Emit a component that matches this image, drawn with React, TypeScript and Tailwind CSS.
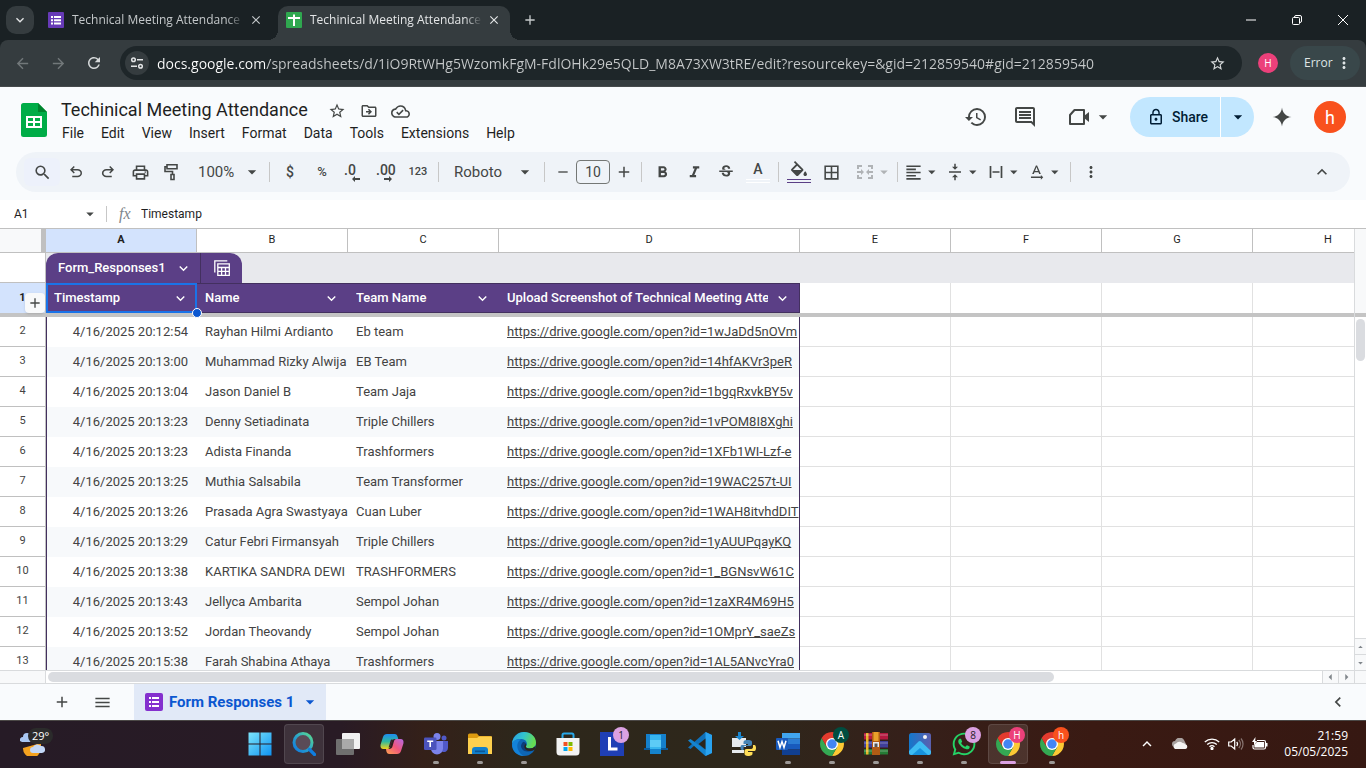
import React from "react";
import {
  MdAdd,
  MdArrowBack,
  MdArrowDropDown,
  MdArrowDropUp,
  MdArrowForward,
  MdArrowLeft,
  MdArrowRight,
  MdBorderAll,
  MdClose,
  MdFormatAlignLeft,
  MdFormatBold,
  MdFormatItalic,
  MdHistory,
  MdKeyboardArrowDown,
  MdKeyboardArrowLeft,
  MdKeyboardArrowUp,
  MdLockOutline,
  MdMenu,
  MdMoreVert,
  MdOutlineCloudDone,
  MdOutlineComment,
  MdOutlineDriveFileMove,
  MdOutlinePrint,
  MdRefresh,
  MdRemove,
  MdSearch,
  MdStarBorder,
  MdStrikethroughS,
  MdTextRotationNone,
  MdVerticalAlignCenter,
} from "react-icons/md";
import { FaWhatsapp } from "react-icons/fa";

/* ---------- data ---------- */

const URL_TEXT =
  "docs.google.com/spreadsheets/d/1iO9RtWHg5WzomkFgM-FdlOHk29e5QLD_M8A73XW3tRE/edit?resourcekey=&gid=212859540#gid=212859540";

const MENUS = ["File", "Edit", "View", "Insert", "Format", "Data", "Tools", "Extensions", "Help"];

const LINK = "https://drive.google.com/open?id=";

const ROWS: [number, string, string, string, string][] = [
  [2, "4/16/2025 20:12:54", "Rayhan Hilmi Ardianto", "Eb team", "1wJaDd5nOVm"],
  [3, "4/16/2025 20:13:00", "Muhammad Rizky Alwija", "EB Team", "14hfAKVr3peR"],
  [4, "4/16/2025 20:13:04", "Jason Daniel B", "Team Jaja", "1bgqRxvkBY5v"],
  [5, "4/16/2025 20:13:23", "Denny Setiadinata", "Triple Chillers", "1vPOM8I8Xghi"],
  [6, "4/16/2025 20:13:23", "Adista Finanda", "Trashformers", "1XFb1WI-Lzf-e"],
  [7, "4/16/2025 20:13:25", "Muthia Salsabila", "Team Transformer", "19WAC257t-UI"],
  [8, "4/16/2025 20:13:26", "Prasada Agra Swastyaya", "Cuan Luber", "1WAH8itvhdDIT"],
  [9, "4/16/2025 20:13:29", "Catur Febri Firmansyah", "Triple Chillers", "1yAUUPqayKQ"],
  [10, "4/16/2025 20:13:38", "KARTIKA SANDRA DEWI", "TRASHFORMERS", "1_BGNsvW61C"],
  [11, "4/16/2025 20:13:43", "Jellyca Ambarita", "Sempol Johan", "1zaXR4M69H5"],
  [12, "4/16/2025 20:13:52", "Jordan Theovandy", "Sempol Johan", "1OMprY_saeZs"],
  [13, "4/16/2025 20:15:38", "Farah Shabina Athaya", "Trashformers", "1AL5ANvcYra0"],
];

/* ---------- browser chrome ---------- */

function Tab({ title, active, icon }: { title: string; active?: boolean; icon: React.ReactNode }) {
  return (
    <div
      className={
        active
          ? "relative mt-1.5 flex h-[34px] w-[232px] items-center rounded-t-[10px] bg-[#353c3f] pr-2 pb-1.5 pl-2 text-[#e3e5e6]"
          : "relative mt-1.5 flex h-[34px] w-[238px] items-center pr-3.5 pb-1.5 pl-2 text-[#c3c7c9]"
      }
    >
      {active && (
        <>
          <span className="absolute bottom-0 -left-2.5 size-2.5 bg-[radial-gradient(circle_at_0_0,transparent_10px,#353c3f_10px)]" />
          <span className="absolute -right-2.5 bottom-0 size-2.5 bg-[radial-gradient(circle_at_100%_0,transparent_10px,#353c3f_10px)]" />
        </>
      )}
      {icon}
      <button className="ml-2 min-w-0 flex-1 overflow-hidden mask-r-from-90% text-left text-[12px] whitespace-nowrap">
        {title}
      </button>
      <button aria-label="Close tab" className="ml-1 flex size-4 items-center justify-center">
        <MdClose size={14} />
      </button>
    </div>
  );
}

function BrowserChrome() {
  return (
    <header className="bg-[#1a2124] font-['Open_Sans','Noto_Sans',sans-serif]">
      <div className="flex h-10">
        <button
          aria-label="Search tabs"
          className="mt-1.5 mr-1.5 ml-1.5 flex size-7 items-center justify-center rounded-[10px] bg-[#353c3f] text-[#e3e5e6]"
        >
          <MdKeyboardArrowDown size={16} />
        </button>
        <Tab
          title="Technical Meeting Attendance -"
          icon={
            <svg viewBox="0 0 16 16" className="size-4 shrink-0">
              <rect width="16" height="16" rx="1" fill="#673ab7" />
              <path
                d="M3 4h2v2H3zM6 4h7v2H6zM3 7.2h2v2H3zM6 7.2h7v2H6zM3 10.4h2v2H3zM6 10.4h7v2H6z"
                fill="#fff"
              />
            </svg>
          }
        />
        <Tab
          active
          title="Techinical Meeting Attendance"
          icon={
            <svg viewBox="0 0 16 16" className="size-4 shrink-0">
              <rect width="16" height="16" rx="1" fill="#2fa84f" />
              <path d="M7 2.5h2V5h5v2H9v7H7V7H2V5h5z" fill="#fff" />
            </svg>
          }
        />
        <button aria-label="New tab" className="ml-2.5 flex w-5 items-center justify-center text-[#c7cbcc]">
          <MdAdd size={16} />
        </button>
        <div className="ml-auto flex text-white">
          <button aria-label="Minimize" className="flex w-[46px] items-center justify-center">
            <svg viewBox="0 0 10 10" className="size-2.5">
              <path d="M0 5h10" stroke="currentColor" />
            </svg>
          </button>
          <button aria-label="Restore" className="flex w-[46px] items-center justify-center">
            <svg viewBox="0 0 10 10" className="size-2.5" fill="none" stroke="currentColor">
              <rect x=".5" y="2.5" width="7" height="7" rx="1" />
              <path d="M2.5 2.5V2A1.5 1.5 0 0 1 4 .5h4A1.500 1.500 0 0 1 9.500 2v4A1.500 1.500 0 0 1 8 7.500h-.5" />
            </svg>
          </button>
          <button aria-label="Close window" className="flex w-[46px] items-center justify-center">
            <svg viewBox="0 0 10 10" className="size-2.5">
              <path d="M0 0l10 10M10 0L0 10" stroke="currentColor" />
            </svg>
          </button>
        </div>
      </div>
      <div className="flex h-[47px] items-center rounded-t-lg border-b border-[#464a4c] bg-[#353c3f] pr-1.5 pl-3">
        <button aria-label="Back" className="mr-4 flex size-5 items-center justify-center text-[#72787a]">
          <MdArrowBack size={17} />
        </button>
        <button aria-label="Forward" className="mr-4 flex size-5 items-center justify-center text-[#72787a]">
          <MdArrowForward size={17} />
        </button>
        <button aria-label="Reload" className="mr-4 flex size-5 items-center justify-center text-[#d5d8d9]">
          <MdRefresh size={18} />
        </button>
        <div className="flex h-[34px] flex-1 items-center rounded-full bg-[#1e2629] pr-4 pl-[5px]">
          <button
            aria-label="Site information"
            className="flex size-6 items-center justify-center rounded-full bg-[#353c3f] text-[#e3e5e6]"
          >
            <svg viewBox="0 0 14 14" className="size-3.5" fill="none" stroke="currentColor" strokeWidth="1.5">
              <circle cx="3.500" cy="3.800" r="1.800" />
              <path d="M7 3.800h6M1 10.200h6" />
              <circle cx="10.500" cy="10.200" r="1.800" />
            </svg>
          </button>
          <input
            aria-label="Address"
            defaultValue={URL_TEXT}
            className="ml-2 min-w-0 flex-1 bg-[linear-gradient(90deg,#ffffff_108px,#c6c9ca_108px)] bg-clip-text text-[14px] text-transparent outline-none"
          />
          <button aria-label="Bookmark this tab" className="text-[#d5d8d9]">
            <MdStarBorder size={17} />
          </button>
        </div>
        <button
          aria-label="Profile"
          className="ml-4 flex size-5 items-center justify-center rounded-full bg-[#ec407a] text-[10px] text-white"
        >
          H
        </button>
        <button className="ml-3 flex h-[34px] w-[70px] items-center rounded-full bg-[#39474a] pl-3.5 text-[12px] text-[#dfe5e6]">
          Error
          <MdMoreVert size={18} className="ml-0.5" />
        </button>
      </div>
    </header>
  );
}

/* ---------- document header ---------- */

function DocHeader() {
  return (
    <div className="flex h-[65px] pr-5 pl-[21px] text-[#444746]">
      <svg viewBox="0 0 26 34" className="mt-4 h-[34px] w-[26px] shrink-0">
        <path d="M2.500 0H17l9 9v22.500a2.500 2.500 0 0 1-2.500 2.500h-21A2.500 2.500 0 0 1 0 31.500v-29A2.500 2.500 0 0 1 2.500 0z" fill="#00ac47" />
        <path d="M17 0l9 9h-9z" fill="#00832d" />
        <path d="M5 13h16v12H5zm2 2v3h5v-3zm7 0v3h5v-3zm-7 5v3h5v-3zm7 0v3h5v-3z" fill="#fff" fillRule="evenodd" />
      </svg>
      <div className="ml-2 pt-2.5">
        <div className="flex h-6 items-center">
          <h1 className="px-1.5 text-[18px] text-[#1f1f1f]">Techinical Meeting Attendance</h1>
          <div className="mt-1 ml-[13px] flex gap-3">
            <button aria-label="Star" className="flex size-5 items-center justify-center">
              <MdStarBorder size={18} />
            </button>
            <button aria-label="Move" className="flex size-5 items-center justify-center">
              <MdOutlineDriveFileMove size={18} />
            </button>
            <button aria-label="See document status" className="flex size-5 items-center justify-center">
              <MdOutlineCloudDone size={19} />
            </button>
          </div>
        </div>
        <nav className="mt-0.5 flex h-5 items-center text-[14px] text-[#1f1f1f]">
          {MENUS.map((m) => (
            <button key={m} className="mr-[3px] px-[7px]">
              {m}
            </button>
          ))}
        </nav>
      </div>
      <div className="ml-auto flex h-[60px] items-center">
        <button aria-label="Version history" className="mr-[25px]">
          <MdHistory size={24} />
        </button>
        <button aria-label="Show all comments" className="mr-8">
          <MdOutlineComment size={24} />
        </button>
        <button aria-label="Join a call" className="mr-[17px] flex items-center">
          <svg viewBox="0 0 20 16" className="h-4 w-5" fill="none" stroke="currentColor" strokeWidth="2">
            <path d="M5.500 1H15v14H1V6z" strokeLinejoin="round" />
            <path d="M15 7l5-4v10l-5-4z" fill="currentColor" stroke="none" />
          </svg>
          <MdArrowDropDown size={20} className="ml-1" />
        </button>
        <div className="flex h-10 overflow-hidden rounded-full bg-[#c2e7ff] text-[14px] font-medium text-[#001d35]">
          <button className="flex w-[91px] items-center border-r border-white pl-[17px]">
            <MdLockOutline size={18} className="mr-[7px]" />
            Share
          </button>
          <button aria-label="Quick sharing actions" className="flex w-[33px] items-center justify-center">
            <MdArrowDropDown size={20} />
          </button>
        </div>
        <button aria-label="Ask Gemini" className="mr-[22px] ml-[18px]">
          <svg viewBox="0 0 20 20" className="size-5">
            <path d="M10 .5c.6 5.500 4 8.900 9.500 9.500-5.500.6-8.900 4-9.500 9.500-.6-5.500-4-8.900-9.500-9.500C6 9.400 9.400 6 10 .5z" fill="currentColor" />
          </svg>
        </button>
        <button
          aria-label="Account"
          className="flex size-8 items-center justify-center rounded-full bg-[#f9511d] text-[18px] text-white"
        >
          h
        </button>
      </div>
    </div>
  );
}

/* ---------- toolbar ---------- */

function Tool({ label, children }: { label: string; children: React.ReactNode }) {
  return (
    <button aria-label={label} className="flex h-8 w-8 shrink-0 items-center justify-center">
      {children}
    </button>
  );
}

function ToolMenu({ label, children }: { label: string; children: React.ReactNode }) {
  return (
    <button aria-label={label} className="flex h-8 w-[41px] shrink-0 items-center justify-between pr-0.5 pl-0.5">
      <span className="flex w-5 justify-center">{children}</span>
      <MdArrowDropDown size={18} />
    </button>
  );
}

function Divider() {
  return <span className="mx-1 h-5 w-px shrink-0 bg-[#c7c7c7]" />;
}

function Toolbar() {
  return (
    <div className="px-4 pb-2">
      <div className="flex h-10 items-center rounded-full bg-[#eff3f8] pl-2 text-[#444746]">
        <button aria-label="Search the menus" className="flex h-7 w-9 items-center justify-center rounded-md bg-[#edf1fb]">
          <MdSearch size={19} />
        </button>
        <Tool label="Undo">
          <svg viewBox="0 -960 960 960" className="size-[18px]" fill="currentColor">
            <path d="M280-200v-80h284q63 0 109.500-40T720-420q0-60-46.500-100T564-560H312l104 104-56 56-200-200 200-200 56 56-104 104h252q97 0 169.500 63T800-420q0 94-72.500 157T564-200H280Z" />
          </svg>
        </Tool>
        <Tool label="Redo">
          <svg viewBox="0 -960 960 960" className="size-[18px]" fill="currentColor">
            <path d="M396-200q-97 0-169.500-63T154-420q0-94 72.500-157T396-640h252L544-744l56-56 200 200-200 200-56-56 104-104H396q-63 0-109.500 40T240-420q0 60 46.500 100T396-280h284v80H396Z" />
          </svg>
        </Tool>
        <Tool label="Print">
          <MdOutlinePrint size={19} />
        </Tool>
        <Tool label="Paint format">
          <svg viewBox="0 0 16 18" className="h-[18px] w-4" fill="none" stroke="currentColor" strokeWidth="1.600">
            <path d="M3 1.800h10v4H3zM3 3.800H1v4.700h7.500v3" />
            <path d="M7 11.500h3v5H7z" />
          </svg>
        </Tool>
        <label className="relative ml-1 flex h-8 w-[73px] items-center">
          <select aria-label="Zoom" className="w-full appearance-none bg-transparent pl-1.5 text-[15px] outline-none">
            <option>100%</option>
          </select>
          <MdArrowDropDown size={20} className="pointer-events-none absolute right-[3px]" />
        </label>
        <Divider />
        <Tool label="Format as currency">
          <span className="text-[14px] font-medium">$</span>
        </Tool>
        <Tool label="Format as percent">
          <span className="text-[13px] font-medium">%</span>
        </Tool>
        <Tool label="Decrease decimal places">
          <span className="relative -ml-1 h-5 w-4 text-left text-[14px] leading-4 font-medium">
            .0
            <svg viewBox="0 0 8 6" className="absolute right-0 bottom-0 h-1.5 w-2" fill="currentColor">
              <path d="M3 0v2h5v2H3v2L0 3z" />
            </svg>
          </span>
        </Tool>
        <Tool label="Increase decimal places">
          <span className="relative -ml-1 h-5 w-4 text-left text-[14px] leading-4 font-medium">
            .00
            <svg viewBox="0 0 8 6" className="absolute right-0 bottom-0 h-1.5 w-2" fill="currentColor">
              <path d="M5 0v2H0v2h5v2l3-3z" />
            </svg>
          </span>
        </Tool>
        <Tool label="More formats">
          <span className="text-[11px] font-medium">123</span>
        </Tool>
        <Divider />
        <label className="relative flex h-8 w-[97px] items-center">
          <select aria-label="Font" className="w-full appearance-none bg-transparent pl-[11px] text-[15px] outline-none">
            <option>Roboto</option>
          </select>
          <MdArrowDropDown size={20} className="pointer-events-none absolute right-[5px]" />
        </label>
        <Divider />
        <button aria-label="Decrease font size" className="flex h-8 w-[27px] items-center justify-center">
          <MdRemove size={16} />
        </button>
        <input
          aria-label="Font size"
          defaultValue="10"
          className="h-6 w-[34px] rounded border border-[#747775] bg-transparent text-center text-[14px] outline-none"
        />
        <button aria-label="Increase font size" className="flex h-8 w-[27px] items-center justify-center">
          <MdAdd size={18} />
        </button>
        <Divider />
        <Tool label="Bold">
          <MdFormatBold size={19} />
        </Tool>
        <Tool label="Italic">
          <MdFormatItalic size={19} />
        </Tool>
        <Tool label="Strikethrough">
          <MdStrikethroughS size={18} />
        </Tool>
        <Tool label="Text color">
          <span className="flex w-6 flex-col items-center">
            <span className="text-[14px] leading-4 font-medium">A</span>
            <span className="mt-0.5 h-1 w-full border-y border-white" />
          </span>
        </Tool>
        <Divider />
        <Tool label="Fill color">
          <span className="flex w-6 flex-col items-center">
            <svg viewBox="2 0 20 18" className="h-4 w-[18px]" fill="currentColor">
              <path d="M16.560 8.940 7.620 0 6.210 1.410l2.380 2.380-5.150 5.150a1.490 1.490 0 0 0 0 2.120l5.500 5.500c.29.29.68.44 1.060.44s.77-.15 1.060-.44l5.500-5.500c.59-.58.59-1.530 0-2.120zM5.210 10 10 5.210 14.790 10zM19 11.500s-2 2.170-2 3.500c0 1.100.9 2 2 2s2-.9 2-2c0-1.330-2-3.500-2-3.500z" />
            </svg>
            <span className="mt-0.5 h-1 w-full border-y border-[#5b3f86]" />
          </span>
        </Tool>
        <Tool label="Borders">
          <MdBorderAll size={19} />
        </Tool>
        <button aria-label="Merge cells" className="flex h-8 w-[46px] items-center justify-between pl-2.5 text-[#b0b3b6]">
          <svg viewBox="0 0 16 14" className="h-3.5 w-4" fill="none" stroke="currentColor" strokeWidth="2">
            <path d="M5 1H1v3M1 10v3h4M11 1h4v3M15 10v3h-4M0 7h5M16 7h-5" />
            <path d="M4 4l3 3-3 3zM12 4L9 7l3 3z" fill="currentColor" stroke="none" />
          </svg>
          <MdArrowDropDown size={18} />
        </button>
        <Divider />
        <ToolMenu label="Horizontal align">
          <MdFormatAlignLeft size={19} />
        </ToolMenu>
        <ToolMenu label="Vertical align">
          <MdVerticalAlignCenter size={18} />
        </ToolMenu>
        <ToolMenu label="Text wrapping">
          <svg viewBox="0 0 14 14" className="size-3.5" fill="none" stroke="currentColor" strokeWidth="1.700">
            <path d="M1.500 1v12M12.500 1v12M3.500 7h7" />
          </svg>
        </ToolMenu>
        <ToolMenu label="Text rotation">
          <MdTextRotationNone size={19} />
        </ToolMenu>
        <Divider />
        <Tool label="More">
          <MdMoreVert size={18} />
        </Tool>
        <button aria-label="Hide the menus" className="mr-[18px] ml-auto">
          <MdKeyboardArrowUp size={20} />
        </button>
      </div>
    </div>
  );
}

function FormulaBar() {
  return (
    <div className="flex h-7 shrink-0 items-center bg-white text-[13px] text-[#1f1f1f]">
      <input aria-label="Name box" defaultValue="A1" className="w-20 bg-transparent pl-3.5 text-[12px] outline-none" />
      <button aria-label="Named ranges" className="flex w-5 items-center justify-center text-[#444746]">
        <MdArrowDropDown size={18} />
      </button>
      <span className="ml-1.5 h-4 w-px bg-[#c7c7c7]" />
      <span className="ml-3 w-5 font-['Liberation_Serif',serif] text-[16px] text-[#80868b] italic">fx</span>
      <input
        aria-label="Formula bar"
        defaultValue="Timestamp"
        className="ml-0.5 min-w-0 flex-1 bg-transparent text-[12px] outline-none"
      />
    </div>
  );
}

/* ---------- grid ---------- */

const EMPTY_COLS = ["E", "F", "G", "H"];

function HeaderCell({ title }: { title: string }) {
  return (
    <div className="flex h-full items-center gap-1.5 pr-2 pl-2">
      <span className="min-w-0 flex-1 overflow-hidden text-left whitespace-nowrap">{title}</span>
      <button aria-label={"Column menu " + title}>
        <MdKeyboardArrowDown size={17} />
      </button>
    </div>
  );
}

function Grid() {
  const colHead = "h-6 border-r border-b border-[#c0c0c0] p-0 text-[11px] font-normal";
  const rowHead = "border-r border-b border-[#c0c0c0] p-0 text-[11px] font-normal";
  const purple = "h-[30px] border-y border-[#43305f] bg-[#5b3f86] p-0 font-medium text-white";
  return (
    <table className="w-[1404px] table-fixed border-separate border-spacing-0 text-[13px] text-[#434343]">
      <colgroup>
        <col className="w-[46px]" />
        <col className="w-[151px]" />
        <col className="w-[151px]" />
        <col className="w-[151px]" />
        <col className="w-[301px]" />
        <col className="w-[151px]" />
        <col className="w-[151px]" />
        <col className="w-[151px]" />
        <col className="w-[151px]" />
      </colgroup>
      <thead>
        <tr className="text-[#1f1f1f]">
          <th aria-label="Select all" className="h-6 border-r-[5px] border-b border-[#c0c0c0] bg-[#f8f9fa] p-0" />
          <th className="h-6 border-r border-b border-[#c0c0c0] bg-[#d3e3fd] p-0 text-[11px] font-bold">A</th>
          {["B", "C", "D", ...EMPTY_COLS].map((c) => (
            <th key={c} className={colHead}>
              {c}
            </th>
          ))}
        </tr>
        <tr>
          <th className="border-r border-b border-[#c0c0c0] bg-white p-0" />
          <td colSpan={8} className="h-[30px] bg-[#e8e9ed] p-0 align-bottom">
            <div className="flex h-[30px] w-[196px] rounded-t-xl bg-[#5b3f86] font-medium text-white">
              <button className="flex flex-1 items-center justify-between border-r border-[#43305f] pr-2 pl-3">
                Form_Responses1
                <MdKeyboardArrowDown size={17} />
              </button>
              <button aria-label="Table views" className="flex w-[41px] items-center justify-center">
                <svg viewBox="0 0 16 16" className="size-4" fill="none" stroke="currentColor" strokeWidth="1.300">
                  <path d="M.8 12.500V.8h12.500M3.800 3.800h11.500v11.500H3.800zM3.800 7.500h11.500M3.800 11.400h11.500M7.600 7.500v7.800M11.500 7.500v7.800" />
                </svg>
              </button>
            </div>
          </td>
        </tr>
        <tr>
          <th className="relative border-r border-[#c0c0c0] bg-[#d3e3fd] p-0 text-[11px] font-bold text-[#1f1f1f]">
            1
            <button
              aria-label="Insert row"
              className="absolute right-0 bottom-0 flex size-5 items-center justify-center rounded-sm bg-[#f8f9fa] text-[#444746] shadow"
            >
              <MdAdd size={16} />
            </button>
          </th>
          <th className={"relative " + purple}>
            <HeaderCell title="Timestamp" />
            <span className="pointer-events-none absolute inset-x-0 -inset-y-px border-2 border-[#1a73e8]" />
            <span className="absolute -right-[5px] -bottom-1.5 z-10 size-2.5 rounded-full border border-white bg-[#0b57d0]" />
          </th>
          <th className={purple}>
            <HeaderCell title="Name" />
          </th>
          <th className={purple}>
            <HeaderCell title="Team Name" />
          </th>
          <th className="h-[30px] border-y border-r border-[#43305f] bg-[#5b3f86] p-0 font-medium text-white">
            <HeaderCell title="Upload Screenshot of Technical Meeting Atte" />
          </th>
          {EMPTY_COLS.map((c) => (
            <td key={c} className="border-r border-[#e1e1e1] bg-white p-0" />
          ))}
        </tr>
        <tr>
          <td colSpan={9} className="h-1 bg-[#c4c4c4] p-0" />
        </tr>
      </thead>
      <tbody>
        {ROWS.map(([n, time, name, team, id]) => (
          <tr key={n} className="group h-[30px]">
            <th className={rowHead}>{n}</th>
            <td className="overflow-hidden border-l border-[#43305f] p-0 pr-[9px] text-right whitespace-nowrap group-even:bg-[#f7f9fb]">
              {time}
            </td>
            <td className="p-0 group-even:bg-[#f7f9fb]">
              <div className="overflow-hidden pl-2 whitespace-nowrap">{name}</div>
            </td>
            <td className="p-0 group-even:bg-[#f7f9fb]">
              <div className="overflow-hidden pl-2 whitespace-nowrap">{team}</div>
            </td>
            <td className="border-r border-[#43305f] p-0 group-even:bg-[#f7f9fb]">
              <div className="overflow-hidden pl-2 whitespace-nowrap">
                <a href={LINK + id} className="underline">
                  {LINK + id}
                </a>
              </div>
            </td>
            {EMPTY_COLS.map((c) => (
              <td key={c} className="border-r border-b border-[#e1e1e1] p-0" />
            ))}
          </tr>
        ))}
      </tbody>
    </table>
  );
}

function SheetArea() {
  const arrow = "flex items-center justify-center bg-[#f8f9fa] text-[#80868b]";
  return (
    <div className="flex min-h-0 flex-1 flex-col border-t border-[#c0c0c0] bg-white">
      <div className="flex min-h-0 flex-1">
        <div className="min-w-0 flex-1 overflow-hidden">
          <Grid />
        </div>
        <div className="flex w-3 shrink-0 flex-col border-l border-[#d9dbdd] bg-white">
          <div className="h-[88px] border-b-4 border-[#c4c4c4] bg-[#f8f9fa]" />
          <div className="mx-px mt-0.5 h-[42px] rounded-full bg-[#dadce0]" />
          <button aria-label="Scroll up" className={arrow + " mt-auto h-4 border-t border-[#d9dbdd]"}>
            <MdArrowDropUp size={16} />
          </button>
          <button aria-label="Scroll down" className={arrow + " h-4 border-t border-[#d9dbdd]"}>
            <MdArrowDropDown size={16} />
          </button>
        </div>
      </div>
      <div className="flex h-3.5 shrink-0 border-y border-[#d9dbdd]">
        <div className="w-[46px] border-r border-[#d9dbdd] bg-[#f8f9fa]" />
        <div className="flex-1 py-px pl-0.5">
          <div className="h-full w-[79%] rounded-full bg-[#dadce0]" />
        </div>
        <button aria-label="Scroll left" className={arrow + " w-4 border-l border-[#d9dbdd]"}>
          <MdArrowLeft size={16} />
        </button>
        <button aria-label="Scroll right" className={arrow + " w-4 border-l border-[#d9dbdd]"}>
          <MdArrowRight size={16} />
        </button>
        <div className="w-3 border-l border-[#d9dbdd] bg-[#f8f9fa]" />
      </div>
    </div>
  );
}

function SheetTabs() {
  return (
    <div className="flex h-9 shrink-0 items-center bg-[#f9fbfd] text-[#444746]">
      <button aria-label="Add sheet" className="ml-[52px] flex size-5 items-center justify-center">
        <MdAdd size={18} />
      </button>
      <button aria-label="All sheets" className="ml-5 flex size-5 items-center justify-center">
        <MdMenu size={19} />
      </button>
      <button className="ml-[22px] flex h-full items-center bg-[#e1e9f7] pr-1.5 pl-[11px] text-[15px] font-bold text-[#0b57d0]">
        <svg viewBox="0 0 18 18" className="mr-1.5 size-[18px]">
          <rect width="18" height="18" rx="2" fill="#8430ce" />
          <path d="M4 4h2v2H4zM7 4h7v2H7zM4 8h2v2H4zM7 8h7v2H7zM4 12h2v2H4zM7 12h7v2H7z" fill="#fff" />
        </svg>
        Form Responses 1
        <MdArrowDropDown size={20} className="ml-1.5" />
      </button>
      <button aria-label="Show side panel" className="mr-[18px] ml-auto">
        <MdKeyboardArrowLeft size={20} />
      </button>
    </div>
  );
}

/* ---------- taskbar ---------- */

function ChromeLogo() {
  return (
    <svg viewBox="0 0 24 24" className="size-6">
      <path d="M12 6h10.390A12 12 0 0 1 12 24l5.200-9z" fill="#fcc934" />
      <path d="M6.800 15L1.610 6A12 12 0 0 0 12 24l5.200-9z" fill="#34a853" />
      <path d="M12 6h10.390A12 12 0 0 0 1.610 6L6.800 15z" fill="#e33b2e" />
      <circle cx="12" cy="12" r="6" fill="#fff" />
      <circle cx="12" cy="12" r="4.700" fill="#4285f4" />
    </svg>
  );
}

type TaskbarApp = {
  name: string;
  icon: React.ReactNode;
  running?: boolean;
  active?: boolean;
  hover?: boolean;
  badge?: string;
  badgeClass?: string;
};

const APPS: TaskbarApp[] = [
  {
    name: "Start",
    icon: (
      <svg viewBox="0 0 24 24" className="size-6">
        <defs>
          <linearGradient id="win" x1="0" y1="0" x2="1" y2="1" gradientUnits="objectBoundingBox">
            <stop offset="0" stopColor="#7de5fb" />
            <stop offset="1" stopColor="#0f93f2" />
          </linearGradient>
        </defs>
        <path d="M.5 .5h11v11H.5zM12.500 .5h11v11h-11zM.5 12.500h11v11H.5zM12.500 12.500h11v11h-11z" fill="url(#win)" />
      </svg>
    ),
  },
  {
    name: "Search",
    hover: true,
    icon: (
      <svg viewBox="0 0 24 24" className="size-6" fill="none">
        <defs>
          <linearGradient id="sea" x1="1" y1="0" x2="0" y2="1">
            <stop offset="0" stopColor="#5ddc8c" />
            <stop offset=".5" stopColor="#2aa5c9" />
            <stop offset="1" stopColor="#0f78e0" />
          </linearGradient>
        </defs>
        <circle cx="11" cy="10.500" r="9" fill="#5a4b57" stroke="url(#sea)" strokeWidth="3" />
        <path d="M17.500 17.500l5 5" stroke="#0f7ee0" strokeWidth="3.200" strokeLinecap="round" />
      </svg>
    ),
  },
  {
    name: "Task view",
    icon: (
      <svg viewBox="0 0 24 24" className="size-6">
        <rect x="6" y="1" width="18" height="16" rx="1" fill="#f1f1f1" />
        <rect x="0" y="7" width="18" height="16" rx="1" fill="#6f6f6f" />
        <path d="M6 7h12v10H6z" fill="#a9a9a9" />
      </svg>
    ),
  },
  {
    name: "Copilot",
    icon: (
      <svg viewBox="0 0 24 24" className="size-6">
        <defs>
          <linearGradient id="cpa" x1="0" y1="0" x2="0" y2="1">
            <stop offset="0" stopColor="#1d8cf0" />
            <stop offset=".5" stopColor="#2fb8a0" />
            <stop offset="1" stopColor="#f2d21b" />
          </linearGradient>
          <linearGradient id="cpb" x1="1" y1="0" x2="0" y2="1">
            <stop offset="0" stopColor="#b469e8" />
            <stop offset=".5" stopColor="#f0567c" />
            <stop offset="1" stopColor="#ffa34f" />
          </linearGradient>
        </defs>
        <path d="M7 2h7.500c2 0 2.700 1 3.200 3l.6 2H15c-2 0-3 .8-3.600 3l-1.300 4.500C9.600 16.500 8.500 17 7 17H3.500C1 17 0 15 .6 12.500L3 5C3.600 3 5 2 7 2z" fill="url(#cpa)" />
        <path d="M17 22H9.500c-2 0-2.700-1-3.200-3L6 17h3c2 0 3-.8 3.600-3l1.300-4.500C14.400 7.500 15.500 7 17 7h3.500c2.500 0 3.500 2 2.900 4.500L21 19c-.6 2-2 3-4 3z" fill="url(#cpb)" />
        <path d="M12.500 7.500h-.8c-.6 0-1 .5-1.300 1.700l-1.800 6.300c.6 0 1.600-.2 2-1.500l1.300-4.500c.2-.8.400-1.500.6-2z" fill="#3a1d2b" />
      </svg>
    ),
  },
  {
    name: "Teams",
    running: true,
    icon: (
      <svg viewBox="0 0 24 24" className="size-6">
        <circle cx="13" cy="4.500" r="3.500" fill="#7b83eb" />
        <circle cx="20" cy="6" r="2.500" fill="#5059c9" />
        <path d="M16 9h8v7a4 4 0 0 1-6 3.500z" fill="#5059c9" />
        <path d="M7 9h12v7.500a6 6 0 0 1-12 0z" fill="#7b83eb" />
        <rect x="0" y="5.500" width="12.500" height="12.500" rx="1.200" fill="#4b53bc" />
        <path d="M3.200 8.500h6v1.600H7v5H5.400v-5H3.200z" fill="#fff" />
      </svg>
    ),
  },
  {
    name: "File Explorer",
    running: true,
    icon: (
      <svg viewBox="0 0 24 24" className="size-6">
        <path d="M0 3a1.500 1.500 0 0 1 1.500-1.500H9L11 4h11.500A1.500 1.500 0 0 1 24 5.500V8H0z" fill="#dc9b10" />
        <path d="M0 6h9l2-1.500h13V22H0z" fill="#fdd04e" />
        <path d="M4 22v-4a3 3 0 0 1 3-3h10a3 3 0 0 1 3 3v4z" fill="#1180cc" />
        <path d="M7 18.500h10v1.700H7z" fill="#0a5696" />
      </svg>
    ),
  },
  {
    name: "Edge",
    running: true,
    icon: (
      <svg viewBox="0 0 24 24" className="size-6">
        <defs>
          <linearGradient id="ed1" x1="0" y1="0" x2="1" y2=".3">
            <stop offset="0" stopColor="#2b9fe0" />
            <stop offset=".5" stopColor="#31c3cf" />
            <stop offset="1" stopColor="#66dc52" />
          </linearGradient>
        </defs>
        <circle cx="12" cy="12" r="12" fill="#0e66b5" />
        <path d="M0 12C.5 4.500 6 0 12 0c7 0 12 5 12 10.500 0 4-3 6-6 6-3.500 0-4.600-1.400-4-2.500 2.500-3.500-1-7.500-5-7C4.500 7 1 9 0 12z" fill="url(#ed1)" />
        <path d="M0 12.500C1 8 5 6.500 9 7.500c-3.500 2-4.500 6-3 10 1 2.700 3.500 5.500 6 6.500C5 24 0 19 0 12.500z" fill="#1382d8" />
        <path d="M14 14c-.6 1.200.5 2.500 4 2.500 1.900 0 3.700-.7 4.800-2-.3 2-1 3-1.800 4-4 2-11 1.500-12-4 0-2 1-4 2.500-4.800C14 10.500 15.300 12 14 14z" fill="#0c3d7a" />
        <path d="M14 14c-.6 1.200.5 2.500 4 2.500 2.500 0 4.500-1 5.600-3l-.4 4c-3 2-8 2-10-.5-1.500-2-1-4 .3-5 .8.500.9 1.200.5 2z" fill="#2c261c" />
      </svg>
    ),
  },
  {
    name: "Microsoft Store",
    icon: (
      <svg viewBox="0 0 24 24" className="size-6">
        <path d="M6.500 7V3a1.500 1.500 0 0 1 1.500-1.500h8A1.500 1.500 0 0 1 17.500 3v4" fill="none" stroke="#29a9ea" strokeWidth="2" />
        <path d="M.5 6h23v14a3.500 3.500 0 0 1-3.500 3.500H4A3.500 3.500 0 0 1 .5 20z" fill="#f3f3f3" />
        <path d="M7.500 10h4v4h-4z" fill="#f25022" />
        <path d="M12.500 10h4v4h-4z" fill="#7fba00" />
        <path d="M7.500 15h4v4h-4z" fill="#00a4ef" />
        <path d="M12.500 15h4v4h-4z" fill="#ffb900" />
      </svg>
    ),
  },
  {
    name: "Lenovo Vantage",
    badge: "1",
    badgeClass: "bg-[#dba1e2] text-[#1f1f1f]",
    icon: (
      <svg viewBox="0 0 24 24" className="size-6">
        <path d="M0 0h24v24H0z" fill="#1f3fb5" />
        <path d="M9.500 5v12h8" fill="none" stroke="#fff" strokeWidth="3" />
      </svg>
    ),
  },
  {
    name: "Phone Link",
    icon: (
      <svg viewBox="0 0 24 24" className="size-6">
        <path d="M2 2h20v14H2z" fill="#1480cc" />
        <path d="M0 16h24v2H0z" fill="#0a5a9a" />
        <path d="M6 3h11v19H6z" fill="#37b5ee" />
        <path d="M6 8h11v7H6z" fill="#5dcbf6" />
        <path d="M6 17h11v5H6z" fill="#1583cd" />
      </svg>
    ),
  },
  {
    name: "Visual Studio Code",
    icon: (
      <svg viewBox="0 0 24 24" className="size-6">
        <path d="M17.500 0L24 3v18l-6.500 3L6.500 13.500 2.500 17 0 15.500 17.500 0z" fill="#1070b8" />
        <path d="M17.500 24L0 8.500 2.500 7l15 11z" fill="#1584cf" />
        <path d="M17.500 0L24 3v18l-6.500 3z" fill="#29a3f0" />
        <path d="M17.500 6.500v11L10.500 12z" fill="#2c261c" />
      </svg>
    ),
  },
  {
    name: "Python installer",
    icon: (
      <svg viewBox="0 0 24 24" className="size-6">
        <path d="M0 6h14v9H0zM0 18h12v3H0z" fill="#e6eaed" />
        <path d="M6 0h3v4h3L7.500 8 3 4h3z" fill="#1b87cf" />
        <path d="M15 8c-3 0-3.500 1-3.500 2.500V12H16v1h-6c-2 0-2 5 0 5h1.500v-2c0-1.500 1-2 2.500-2h4c1.200 0 2-.8 2-2v-2c0-1.500-1.500-2-5-2z" fill="#4584b6" />
        <path d="M16 24c3.500 0 4.500-1 4.500-2.500V20H16v-1h6.500c2 0 2-6 0-6H21v2c0 1.500-1 2-2.500 2h-4c-1.200 0-2 .8-2 2v2.500c0 1.500 1 2.500 3.500 2.500z" fill="#ffde57" />
      </svg>
    ),
  },
  {
    name: "Word",
    running: true,
    icon: (
      <svg viewBox="0 0 24 24" className="size-6">
        <path d="M6 1h18v5.500H6z" fill="#41a5ee" />
        <path d="M6 6.500h18V12H6z" fill="#2b7cd3" />
        <path d="M6 12h18v5.500H6z" fill="#185abd" />
        <path d="M6 17.500h18V23H6z" fill="#103f91" />
        <rect x="0" y="6" width="12" height="12" rx="1" fill="#185abd" />
        <path d="M2 8.700l2 6.800 2-6 2 6 2-6.800" fill="none" stroke="#fff" strokeWidth="1.500" />
      </svg>
    ),
  },
  { name: "Chrome profile A", running: true, badge: "A", badgeClass: "bg-[#004d40] text-white", icon: <ChromeLogo /> },
  {
    name: "WinRAR",
    running: true,
    icon: (
      <svg viewBox="0 0 24 24" className="size-6">
        <path d="M0 1h24v6.500H0z" fill="#b3193f" />
        <path d="M0 9h24v6.500H0z" fill="#3f3f9a" />
        <path d="M0 17h24v5.500H0z" fill="#257b35" />
        <path d="M2 1h2.500v21.500H2z" fill="#e8b62c" />
        <path d="M0 3h24M0 11h24M0 19h24" stroke="#fff" strokeOpacity=".35" strokeWidth="1" />
        <path d="M8 0h8v23H8z" fill="#b25b14" />
        <path d="M9.500 0h5v9h-5z" fill="#e9a12a" />
        <path d="M9 10h6v5H9z" fill="#ececec" />
        <path d="M10.500 11.500h3v3.500h-3z" fill="#555" />
      </svg>
    ),
  },
  {
    name: "Photos",
    running: true,
    icon: (
      <svg viewBox="0 0 24 24" className="size-6">
        <defs>
          <linearGradient id="pho" x1="0" y1="0" x2="1" y2="0">
            <stop offset="0" stopColor="#1378cc" />
            <stop offset="1" stopColor="#5c5fae" />
          </linearGradient>
        </defs>
        <rect x="1" y="1" width="22" height="22" rx="2.500" fill="url(#pho)" />
        <circle cx="17" cy="5" r="2" fill="#f4f4f4" />
        <path d="M1 19l9.500-9.500c.8-.8 1.800-.8 2.600 0L23 19v1.500a2.500 2.500 0 0 1-2.500 2.500h-17A2.500 2.500 0 0 1 1 20.500z" fill="#3dbcf3" />
        <path d="M4 23l8-7 8 7z" fill="#1792dd" />
      </svg>
    ),
  },
  {
    name: "WhatsApp",
    running: true,
    badge: "8",
    badgeClass: "bg-[#dba1e2] text-[#1f1f1f]",
    icon: <FaWhatsapp size={26} color="#25d366" />,
  },
  { name: "Chrome profile H", active: true, hover: true, badge: "H", badgeClass: "bg-[#ec407a] text-white", icon: <ChromeLogo /> },
  { name: "Chrome profile h", running: true, badge: "h", badgeClass: "bg-[#f9511d] text-white", icon: <ChromeLogo /> },
];

function Taskbar() {
  return (
    <footer className="flex h-12 shrink-0 items-center border-t border-[#4b4846] bg-[linear-gradient(90deg,#261b26_0%,#291b25_25%,#342019_31%,#2d271b_38%,#2e271b_55%,#35201a_66%,#3a1a13_80%,#361812_100%)] pb-0.5 font-['Open_Sans','Noto_Sans',sans-serif] text-white">
      <div className="w-60 shrink-0 pl-5">
        <button aria-label="Weather, 29 degrees" className="relative block h-6 w-8">
          <svg viewBox="0 0 26 24" className="h-6 w-[26px]">
            <path d="M3 16a9 9 0 0 0 18 1V11z" fill="#f4a21f" />
            <path d="M0 9a3 3 0 0 1 3-4 4 4 0 0 1 8 0v5H2z" fill="#a9c6f2" />
            <path d="M13 21a3 3 0 0 1 0-6 5 5 0 0 1 8-1 3.500 3.500 0 0 1 1 7z" fill="#c3d8f7" />
          </svg>
          <span className="absolute -top-1 left-2 rounded-full bg-[#2b2b2b] px-1 text-[11px] leading-4">29°</span>
        </button>
      </div>
      <div className="flex gap-1">
        {APPS.map((a) => (
          <button
            key={a.name}
            aria-label={a.name}
            className={
              a.hover
                ? "relative flex size-10 items-center justify-center rounded bg-white/10 inset-ring inset-ring-white/10"
                : "relative flex size-10 items-center justify-center"
            }
          >
            {a.icon}
            {a.badge && (
              <span
                className={
                  "absolute top-[3px] right-[3px] flex size-4 items-center justify-center rounded-full text-[10px] leading-none " +
                  a.badgeClass
                }
              >
                {a.badge}
              </span>
            )}
            {a.running && <span className="absolute bottom-0 h-[3px] w-1.5 rounded-full bg-[#9c9896]" />}
            {a.active && <span className="absolute bottom-0 h-[3px] w-4 rounded-full bg-[#dba1e2]" />}
          </button>
        ))}
      </div>
      <div className="ml-auto flex items-center pr-[18px]">
        <button aria-label="Show hidden icons">
          <MdKeyboardArrowUp size={18} />
        </button>
        <svg viewBox="0 0 16 11" className="ml-4 h-[11px] w-4">
          <path d="M3 9a3 3 0 0 1 0-6 5 5 0 0 1 9-1l3 6z" fill="#a9a19f" />
          <path d="M3 11a3 3 0 0 1 1-5.500 4.500 4.500 0 0 1 6.500-.5 3 3 0 0 1 3 1.500A2.300 2.300 0 0 1 13.500 11z" fill="#f5f3f2" />
        </svg>
        <svg viewBox="0 0 16 13" className="ml-4 h-[13px] w-4" fill="none" stroke="currentColor" strokeWidth="1.300">
          <path d="M.8 5a10.500 10.500 0 0 1 14.400 0M3.200 7.500a7 7 0 0 1 9.600 0M5.500 9.800a3.600 3.600 0 0 1 5 0" />
          <circle cx="8" cy="11.500" r="1" fill="currentColor" />
        </svg>
        <svg viewBox="0 0 16 14" className="ml-2 h-3.5 w-4" fill="none" stroke="currentColor" strokeWidth="1.200">
          <path d="M.7 5v4h2.500l3.500 3V2L3.200 5zM8.700 5a3 3 0 0 1 0 4" />
          <path d="M10.800 3a6 6 0 0 1 0 8M13 1.500a8.500 8.500 0 0 1 0 11" strokeOpacity=".4" />
        </svg>
        <svg viewBox="0 0 16 14" className="ml-2 h-3.5 w-4" fill="none" stroke="currentColor" strokeWidth="1.200">
          <path d="M5 3.500h7A1.500 1.500 0 0 1 13.500 5v5.500A1.500 1.500 0 0 1 12 12H2.500A1.500 1.500 0 0 1 1 10.500V8" />
          <path d="M5 5.500h6.500V10H3V8z" fill="currentColor" />
          <path d="M14 6h1.500v3.500H14zM3.500 0L0 5h2v3.500L5 4H3.200z" fill="currentColor" stroke="none" />
        </svg>
        <div className="ml-4 text-right text-[12px] leading-4">
          <div>21:59</div>
          <div>05/05/2025</div>
        </div>
      </div>
    </footer>
  );
}

export default function App() {
  return (
    <div className="flex h-screen w-full flex-col overflow-hidden bg-[#f9fbfd] font-['Roboto','Liberation_Sans',sans-serif]">
      <BrowserChrome />
      <DocHeader />
      <Toolbar />
      <FormulaBar />
      <SheetArea />
      <SheetTabs />
      <Taskbar />
    </div>
  );
}
